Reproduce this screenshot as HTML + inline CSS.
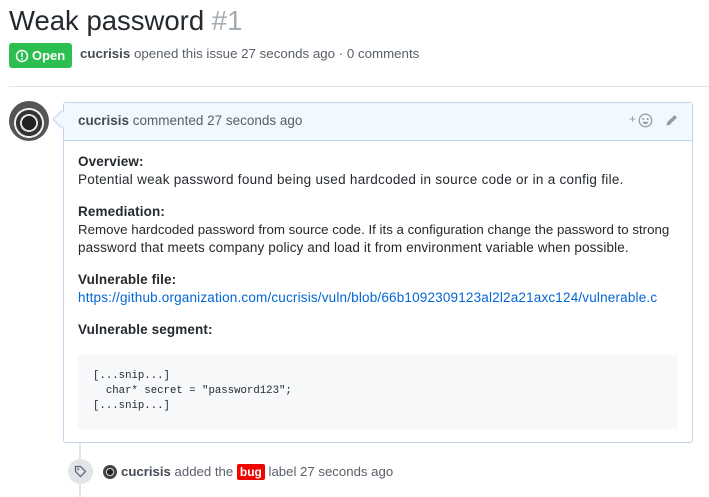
<!DOCTYPE html>
<html><head><meta charset="utf-8"><style>
body{margin:0;width:709px;height:497px;overflow:hidden;background:#fff;font-family:"Liberation Sans",sans-serif;color:#24292e;position:relative}
.a{position:absolute;white-space:nowrap}
h1{position:absolute;left:9px;top:1px;margin:0;font-size:27.5px;font-weight:400;line-height:40px}
h1 span{color:#a3aab1}
.badge{left:9px;top:43px;width:63px;height:25px;background:#2cbe4e;border-radius:3px;color:#fff;font-weight:bold;font-size:13px;line-height:25px}
.meta{left:80px;top:46px;font-size:13.3px;color:#586069}
.meta b{color:#444d56}
.hr{left:9px;top:86px;width:700px;height:1px;background:#e1e4e8}
.av{left:9px;top:101px;width:40px;height:40px;border-radius:50%;background:radial-gradient(circle at 50% 55%,#222 0 7px,#ddd 7px 9px,#333 9px 13px,#eee 13px 15px,#555 15px 20px)}
.box{left:63px;top:102px;width:628px;height:339px;border:1px solid #c0d3eb;border-radius:3px}
.hd{left:64px;top:103px;width:628px;height:37px;background:#f1f8ff;border-bottom:1px solid #c0d3eb}
.arrow{left:55px;top:113px;width:12px;height:12px;background:#f1f8ff;border-left:1px solid #c0d3eb;border-bottom:1px solid #c0d3eb;transform:rotate(45deg)}
.ht{left:78px;top:113px;font-size:13.5px;color:#586069}
.ht b{color:#444d56}
.t{left:78px;font-size:13.5px;line-height:18px;letter-spacing:0.12px}
.code{left:78px;top:355px;width:600px;height:74px;background:#f6f8fa;border-radius:3px}
pre{position:absolute;left:93px;top:369px;margin:0;font-family:"Liberation Mono",monospace;font-size:10.7px;line-height:15px;color:#24292e}
.line{left:79px;width:2px;background:#e1e4e8}
.tag{left:68px;top:459px;width:25px;height:25px;border-radius:50%;background:#e1e4e8}
.ev{left:121px;top:464px;font-size:13.2px;color:#586069}
.ev b{color:#444d56}
.bug{background:#ee0701;color:#fff;font-weight:bold;padding:1px 3px;border-radius:2px;font-size:12px}
</style></head><body>
<h1>Weak password <span>#1</span></h1>
<div class="a badge"><svg width="14" height="14" viewBox="0 0 14 14" style="position:absolute;left:6px;top:6px"><circle cx="7" cy="7" r="5.5" fill="none" stroke="#fff" stroke-width="1.5"/><rect x="6.2" y="3.5" width="1.6" height="4.5" fill="#fff"/><rect x="6.2" y="9" width="1.6" height="1.6" fill="#fff"/></svg><span style="position:absolute;left:23px">Open</span></div>
<div class="a meta"><b>cucrisis</b> opened this issue 27 seconds ago · 0 comments</div>
<div class="a hr"></div>
<div class="a av"></div>
<div class="a line" style="top:442px;height:55px"></div>
<div class="a box"></div>
<div class="a hd"></div>
<div class="a arrow"></div>
<div class="a ht"><b>cucrisis</b> commented 27 seconds ago</div>
<div class="a" style="left:629px;top:112px;color:#959da5;font-size:12px">+</div>
<svg class="a" style="left:638px;top:113px" width="15" height="15" viewBox="0 0 15 15"><circle cx="7.5" cy="7.5" r="6.3" fill="none" stroke="#959da5" stroke-width="1.3"/><circle cx="5.3" cy="6" r="1" fill="#959da5"/><circle cx="9.7" cy="6" r="1" fill="#959da5"/><path d="M4.5 8.8h6q-1 2.5-3 2.5t-3-2.5z" fill="#959da5"/></svg>
<svg class="a" style="left:665px;top:114px" width="13" height="13" viewBox="0 0 13 13"><path d="M9.5 1l2.5 2.5-7.5 7.5-3 .5.5-3z" fill="#959da5"/></svg>
<div class="a t" style="top:153px"><b>Overview:</b></div>
<div class="a t" style="top:171px;letter-spacing:0.28px">Potential weak password found being used hardcoded in source code or in a config file.</div>
<div class="a t" style="top:203px"><b>Remediation:</b></div>
<div class="a t" style="top:221px;font-size:13.3px;letter-spacing:0">Remove hardcoded password from source code. If its a configuration change the password to strong</div>
<div class="a t" style="top:239px">password that meets company policy and load it from environment variable when possible.</div>
<div class="a t" style="top:271px"><b>Vulnerable file:</b></div>
<div class="a t" style="top:289px;color:#0366d6;letter-spacing:0.18px">https://github.organization.com/cucrisis/vuln/blob/66b1092309123al2l2a21axc124/vulnerable.c</div>
<div class="a t" style="top:321px"><b>Vulnerable segment:</b></div>
<div class="a code"></div>
<pre>[...snip...]
  char* secret = "password123";
[...snip...]</pre>
<div class="a tag"></div>
<svg class="a" style="left:74px;top:465px" width="13" height="13" viewBox="0 0 13 13"><path d="M1.5 1.5h5l5 5-5 5-5-5z" fill="none" stroke="#586069" stroke-width="1.2"/><circle cx="4.2" cy="4.2" r="1" fill="#586069"/></svg>
<div class="a" style="left:103px;top:465px;width:14px;height:14px;border-radius:50%;background:radial-gradient(circle,#222 0 3px,#ccc 3px 4px,#444 4px)"></div>
<div class="a ev"><b>cucrisis</b> added the <span class="bug">bug</span> label 27 seconds ago</div>
</body></html>
